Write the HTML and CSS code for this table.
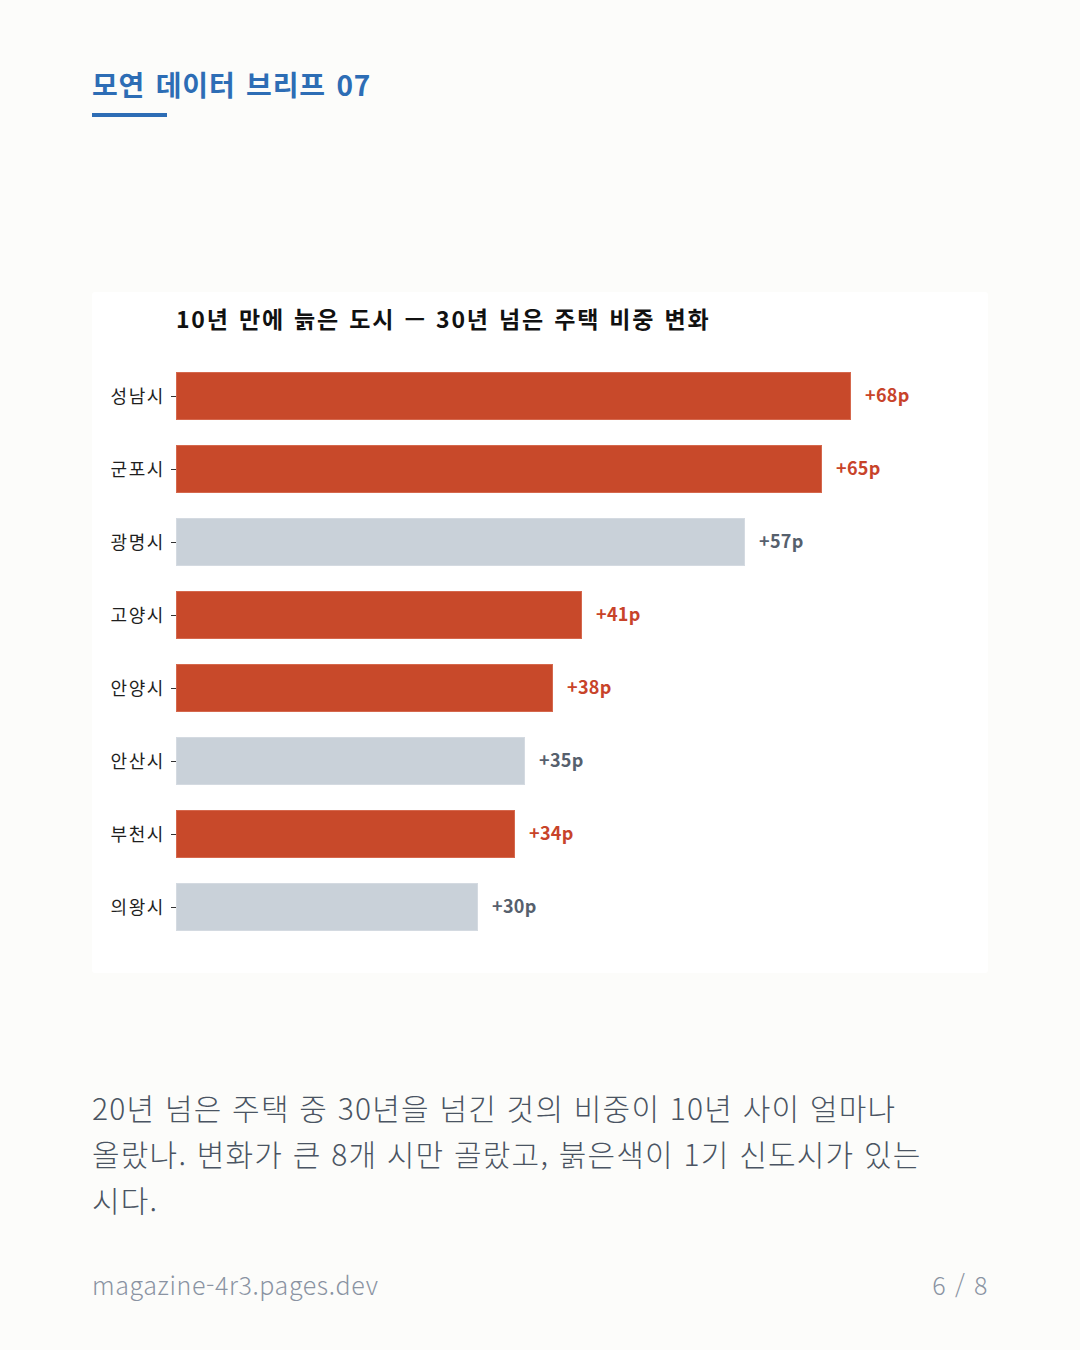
FILE: index.html
```html
<!DOCTYPE html>
<html lang="ko">
<head>
<meta charset="utf-8">
<title>모연 데이터 브리프 07</title>
<link rel="stylesheet" href="styles.css">
</head>
<body>
<main class="page">
  <header class="brand">
    <h1 class="brand-title">모연 데이터 브리프 07</h1>
    <div class="brand-rule"></div>
  </header>

  <section class="chart-card">
    <h2 class="chart-title">10년 만에 늙은 도시 — 30년 넘은 주택 비중 변화</h2>
    <div class="chart-rows">
      <div class="row"><span class="city">성남시</span><div class="bar hot" style="width:675px"></div><span class="val hot">+68p</span></div>
      <div class="row"><span class="city">군포시</span><div class="bar hot" style="width:646px"></div><span class="val hot">+65p</span></div>
      <div class="row"><span class="city">광명시</span><div class="bar cool" style="width:569px"></div><span class="val cool">+57p</span></div>
      <div class="row"><span class="city">고양시</span><div class="bar hot" style="width:406px"></div><span class="val hot">+41p</span></div>
      <div class="row"><span class="city">안양시</span><div class="bar hot" style="width:377px"></div><span class="val hot">+38p</span></div>
      <div class="row"><span class="city">안산시</span><div class="bar cool" style="width:349px"></div><span class="val cool">+35p</span></div>
      <div class="row"><span class="city">부천시</span><div class="bar hot" style="width:339px"></div><span class="val hot">+34p</span></div>
      <div class="row"><span class="city">의왕시</span><div class="bar cool" style="width:302px"></div><span class="val cool">+30p</span></div>
    </div>
  </section>

  <p class="caption">20년 넘은 주택 중 30년을 넘긴 것의 비중이 10년 사이 얼마나 올랐나. 변화가 큰 8개 시만 골랐고, 붉은색이 1기 신도시가 있는 시다.</p>

  <footer class="foot">
    <span class="foot-site">magazine-4r3.pages.dev</span>
    <span class="foot-page">6 / 8</span>
  </footer>
</main>
</body>
</html>
```

FILE: styles.css
```css
* { box-sizing: border-box; }
html, body {
  margin: 0;
  padding: 0;
  background: #fcfcfa;
}
body {
  font-family: "Noto Sans CJK KR", "Noto Sans", sans-serif;
  color: #222;
}
.page {
  width: 1080px;
  height: 1350px;
  padding: 62px 92px 0 92px;
  display: flex;
  flex-direction: column;
}
.brand-title {
  margin: 0;
  font-size: 28px;
  line-height: 44px;
  font-weight: 700;
  color: #2d6db5;
  letter-spacing: 0.8px;
  word-spacing: 2px;
}
.brand-rule {
  width: 75px;
  height: 4px;
  background: #2d6db5;
  margin-top: 7px;
}
.chart-card {
  margin-top: 175px;
  background: #ffffff;
  border-radius: 3px;
  padding: 10px 0 41px 0;
  height: 681px;
}
.chart-title {
  margin: 0 0 0 84px;
  font-size: 23px;
  line-height: 32px;
  font-weight: 700;
  color: #111;
  letter-spacing: 1.8px;
  word-spacing: 1px;
}
.chart-rows {
  margin-top: 38px;
  display: flex;
  flex-direction: column;
  gap: 25px;
}
.row {
  display: flex;
  align-items: center;
  height: 48px;
}
.city {
  width: 84px;
  flex: none;
  text-align: right;
  padding-right: 11px;
  font-size: 18px;
  letter-spacing: 1.6px;
  color: #1f1f1f;
  position: relative;
  margin-bottom: 2px;
}
.city::after {
  content: "";
  position: absolute;
  right: 0;
  top: 55%;
  width: 5px;
  height: 1px;
  background: #333;
}
.bar {
  height: 48px;
  flex: none;
}
.bar.hot {
  background: #c8492a;
  box-shadow: inset 0 0 0 1px #d5684d;
}
.bar.cool {
  background: #c9d1d9;
  box-shadow: inset 0 0 0 1px #d4dae1;
}
.val {
  margin-left: 14px;
  margin-bottom: 4px;
  font-size: 18px;
  font-weight: 700;
  letter-spacing: 0.3px;
}
.val.hot { color: #c8432a; }
.val.cool { color: #56606d; }
.caption {
  margin: 111px 0 0 0;
  font-size: 30px;
  line-height: 46px;
  font-weight: 300;
  color: #4a5462;
  letter-spacing: 1.2px;
  word-break: keep-all;
  max-width: 930px;
}
.foot {
  margin-top: auto;
  margin-bottom: 48px;
  display: flex;
  justify-content: space-between;
  align-items: center;
  font-size: 25px;
  line-height: 36px;
  font-weight: 300;
  color: #8a93a2;
  letter-spacing: 0.6px;
}
.foot-page {
  word-spacing: 1px;
}
```
